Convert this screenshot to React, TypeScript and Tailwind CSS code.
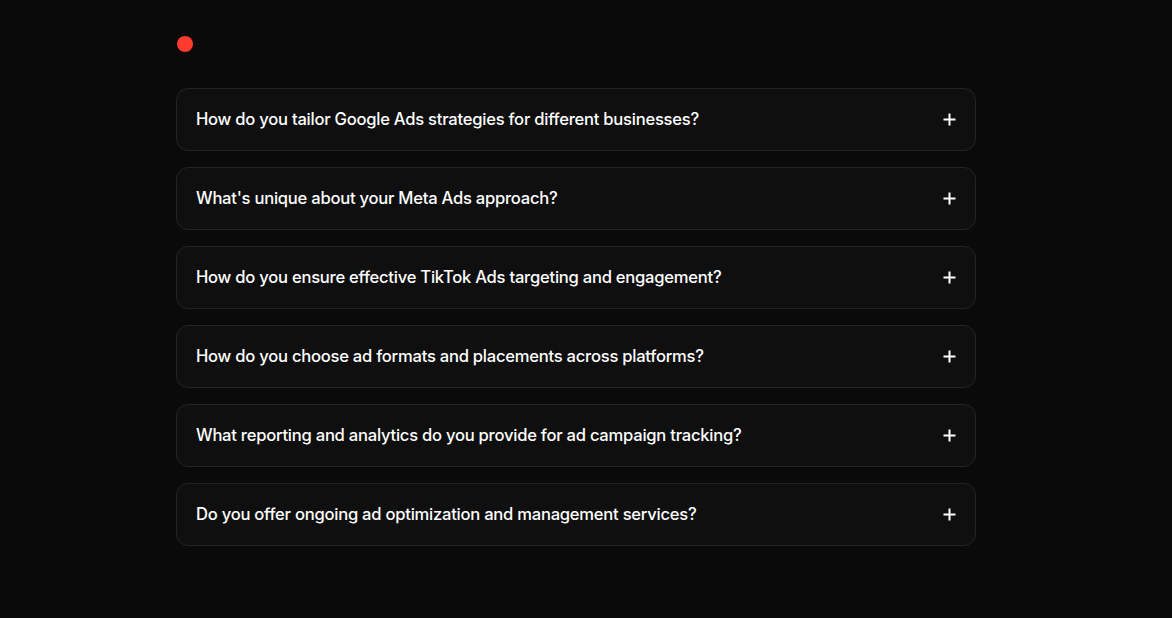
const questions = [
  "How do you tailor Google Ads strategies for different businesses?",
  "What's unique about your Meta Ads approach?",
  "How do you ensure effective TikTok Ads targeting and engagement?",
  "How do you choose ad formats and placements across platforms?",
  "What reporting and analytics do you provide for ad campaign tracking?",
  "Do you offer ongoing ad optimization and management services?",
];

function PlusIcon() {
  return (
    <svg width="13" height="13" viewBox="0 0 13 13" fill="none" stroke="currentColor" strokeWidth="2">
      <path d="M6.5 0.5v12M0.5 6.5h12" />
    </svg>
  );
}

export default function App() {
  return (
    <div className="min-h-[618px] w-full bg-[#0a0a0a] font-['Inter',sans-serif] pt-9">
      <div className="w-[1152px]">
        <div className="mx-auto w-[800px]">
          <div className="ml-px h-4 w-4 rounded-full bg-[#ff3b30]" />
          <div className="mt-9 flex flex-col gap-4">
            {questions.map((q) => (
              <button
                key={q}
                className="flex h-[63px] w-full items-center justify-between rounded-xl border border-[#242424] bg-[#0f0f0f] px-[19px] text-left text-white"
              >
                <span className="text-[16.6px] font-medium tracking-[-0.25px]">{q}</span>
                <span>
                  <PlusIcon />
                </span>
              </button>
            ))}
          </div>
        </div>
      </div>
    </div>
  );
}
